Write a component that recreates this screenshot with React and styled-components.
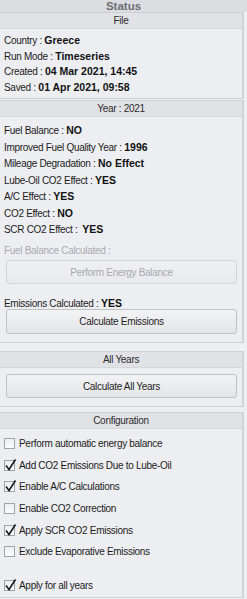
import React from "react";
import styled, { createGlobalStyle } from "styled-components";

const Global = createGlobalStyle`
  html, body { margin: 0; padding: 0; background: #eeeff2; }
  body {
    font-family: "Liberation Sans", Arial, sans-serif;
    font-size: 10px;
    letter-spacing: -0.3px;
    color: #1c1c1c;
  }
`;

const Shell = styled.div`
  width: 247px;
  height: 599px;
  overflow: hidden;
  background: #eeeff2;
  display: flex;
  flex-direction: column;
`;

const TitleBar = styled.div`
  height: 12px;
  line-height: 12px;
  background: #dcdde1;
  color: #6a6d73;
  font-weight: bold;
  font-size: 11.5px;
  letter-spacing: 0;
  text-align: center;
  flex: none;
`;

const Panel = styled.section`
  margin-right: 3px;
  margin-top: ${(p) => p.$gap || 0}px;
  background: #eceef1;
  border-top: 1px solid #cfd0d4;
  border-bottom: 1px solid #cfd0d4;
  border-right: 2px solid #d2d3d7;
  flex: ${(p) => (p.$grow ? "1" : "none")};
  display: flex;
  flex-direction: column;
`;

const PanelHeader = styled.div`
  height: 15px;
  line-height: 15px;
  background: #e1e2e6;
  border-bottom: 1px solid #d6d7db;
  text-align: center;
  color: #2c2c2c;
`;

const Body = styled.div`
  padding: ${(p) => p.$pad || "5px 6px 4px 5px"};
  display: flex;
  flex-direction: column;
`;

const Row = styled.div`
  height: ${(p) => p.$h || 16.5}px;
  line-height: ${(p) => p.$h || 16.5}px;
  white-space: nowrap;
  color: ${(p) => (p.$disabled ? "#a9abb0" : "#1c1c1c")};
  margin-top: ${(p) => p.$mt || 0}px;
`;

const Value = styled.b`
  font-weight: bold;
  font-size: 10.5px;
  letter-spacing: 0;
  color: #111;
`;

const Button = styled.button`
  display: block;
  width: 231px;
  height: ${(p) => p.$h || 25}px;
  margin: ${(p) => p.$m || "0"};
  border: 1px solid ${(p) => (p.$disabled ? "#d3d4d8" : "#bfc1c5")};
  border-radius: 3px;
  background: ${(p) =>
    p.$disabled
      ? "linear-gradient(#eff0f3, #e9eaed)"
      : "linear-gradient(#f2f3f5, #e4e5e8)"};
  color: ${(p) => (p.$disabled ? "#a7a9ae" : "#1f1f1f")};
  font-family: "Liberation Sans", Arial, sans-serif;
  font-size: 10px;
  letter-spacing: -0.3px;
  padding: 0;
  box-sizing: border-box;
`;

const CheckRow = styled.label`
  display: flex;
  align-items: center;
  height: 21.6px;
  gap: 4px;
  margin-top: ${(p) => p.$mt || 0}px;
  white-space: nowrap;
  color: #1c1c1c;
  flex: none;
`;

const Box = styled.span`
  position: relative;
  width: 11px;
  height: 11px;
  box-sizing: border-box;
  border: 1px solid #a0a3a9;
  background: linear-gradient(#eceef1, #fcfcfd);
  flex: none;
`;

const Tick = styled.svg`
  position: absolute;
  left: 0px;
  top: -2px;
  width: 12px;
  height: 12px;
  overflow: visible;
`;

function Check({ checked, children, mt }) {
  return (
    <CheckRow $mt={mt}>
      <Box>
        {checked && (
          <Tick viewBox="0 0 12 12">
            <path d="M1 6.5 L4 10.5 L10.5 0.5" fill="none" stroke="#1b1b1b" strokeWidth="1.6" />
          </Tick>
        )}
      </Box>
      <span>{children}</span>
    </CheckRow>
  );
}

export default function App() {
  return (
    <Shell>
      <Global />
      <TitleBar>Status</TitleBar>
      <Panel>
        <PanelHeader>File</PanelHeader>
        <Body $pad="4px 6px 3px 4px">
          <Row $h={15.5}>Country : <Value>Greece</Value></Row>
          <Row $h={15.5}>Run Mode : <Value>Timeseries</Value></Row>
          <Row $h={15.5}>Created : <Value>04 Mar 2021, 14:45</Value></Row>
          <Row $h={15.5}>Saved : <Value>01 Apr 2021, 09:58</Value></Row>
        </Body>
      </Panel>
      <Panel $gap={1}>
        <PanelHeader>Year : 2021</PanelHeader>
        <Body $pad="5px 6px 8px 4px">
          <Row>Fuel Balance : <Value>NO</Value></Row>
          <Row>Improved Fuel Quality Year : <Value>1996</Value></Row>
          <Row>Mileage Degradation : <Value>No Effect</Value></Row>
          <Row>Lube-Oil CO2 Effect : <Value>YES</Value></Row>
          <Row>A/C Effect : <Value>YES</Value></Row>
          <Row>CO2 Effect : <Value>NO</Value></Row>
          <Row>SCR CO2 Effect : &nbsp;<Value>YES</Value></Row>
          <Row $mt={5} $disabled>Fuel Balance Calculated :</Row>
          <Button $disabled $h={24} $m="1px 0 0 2px">Perform Energy Balance</Button>
          <Row $mt={13} $h={12}>Emissions Calculated : <Value>YES</Value></Row>
          <Button $m="0 0 0 2px">Calculate Emissions</Button>
        </Body>
      </Panel>
      <Panel $gap={8}>
        <PanelHeader>All Years</PanelHeader>
        <Body $pad="6px 6px 8px 6px">
          <Button $h={24}>Calculate All Years</Button>
        </Body>
      </Panel>
      <Panel $gap={5} $grow>
        <PanelHeader>Configuration</PanelHeader>
        <Body $pad="4px 6px 0 4px">
          <Check>Perform automatic energy balance</Check>
          <Check checked>Add CO2 Emissions Due to Lube-Oil</Check>
          <Check checked>Enable A/C Calculations</Check>
          <Check>Enable CO2 Correction</Check>
          <Check checked>Apply SCR CO2 Emissions</Check>
          <Check>Exclude Evaporative Emissions</Check>
          <Check checked mt={12.4}>Apply for all years</Check>
        </Body>
      </Panel>
      <div style={{ height: 5, flex: "none" }} />
    </Shell>
  );
}
